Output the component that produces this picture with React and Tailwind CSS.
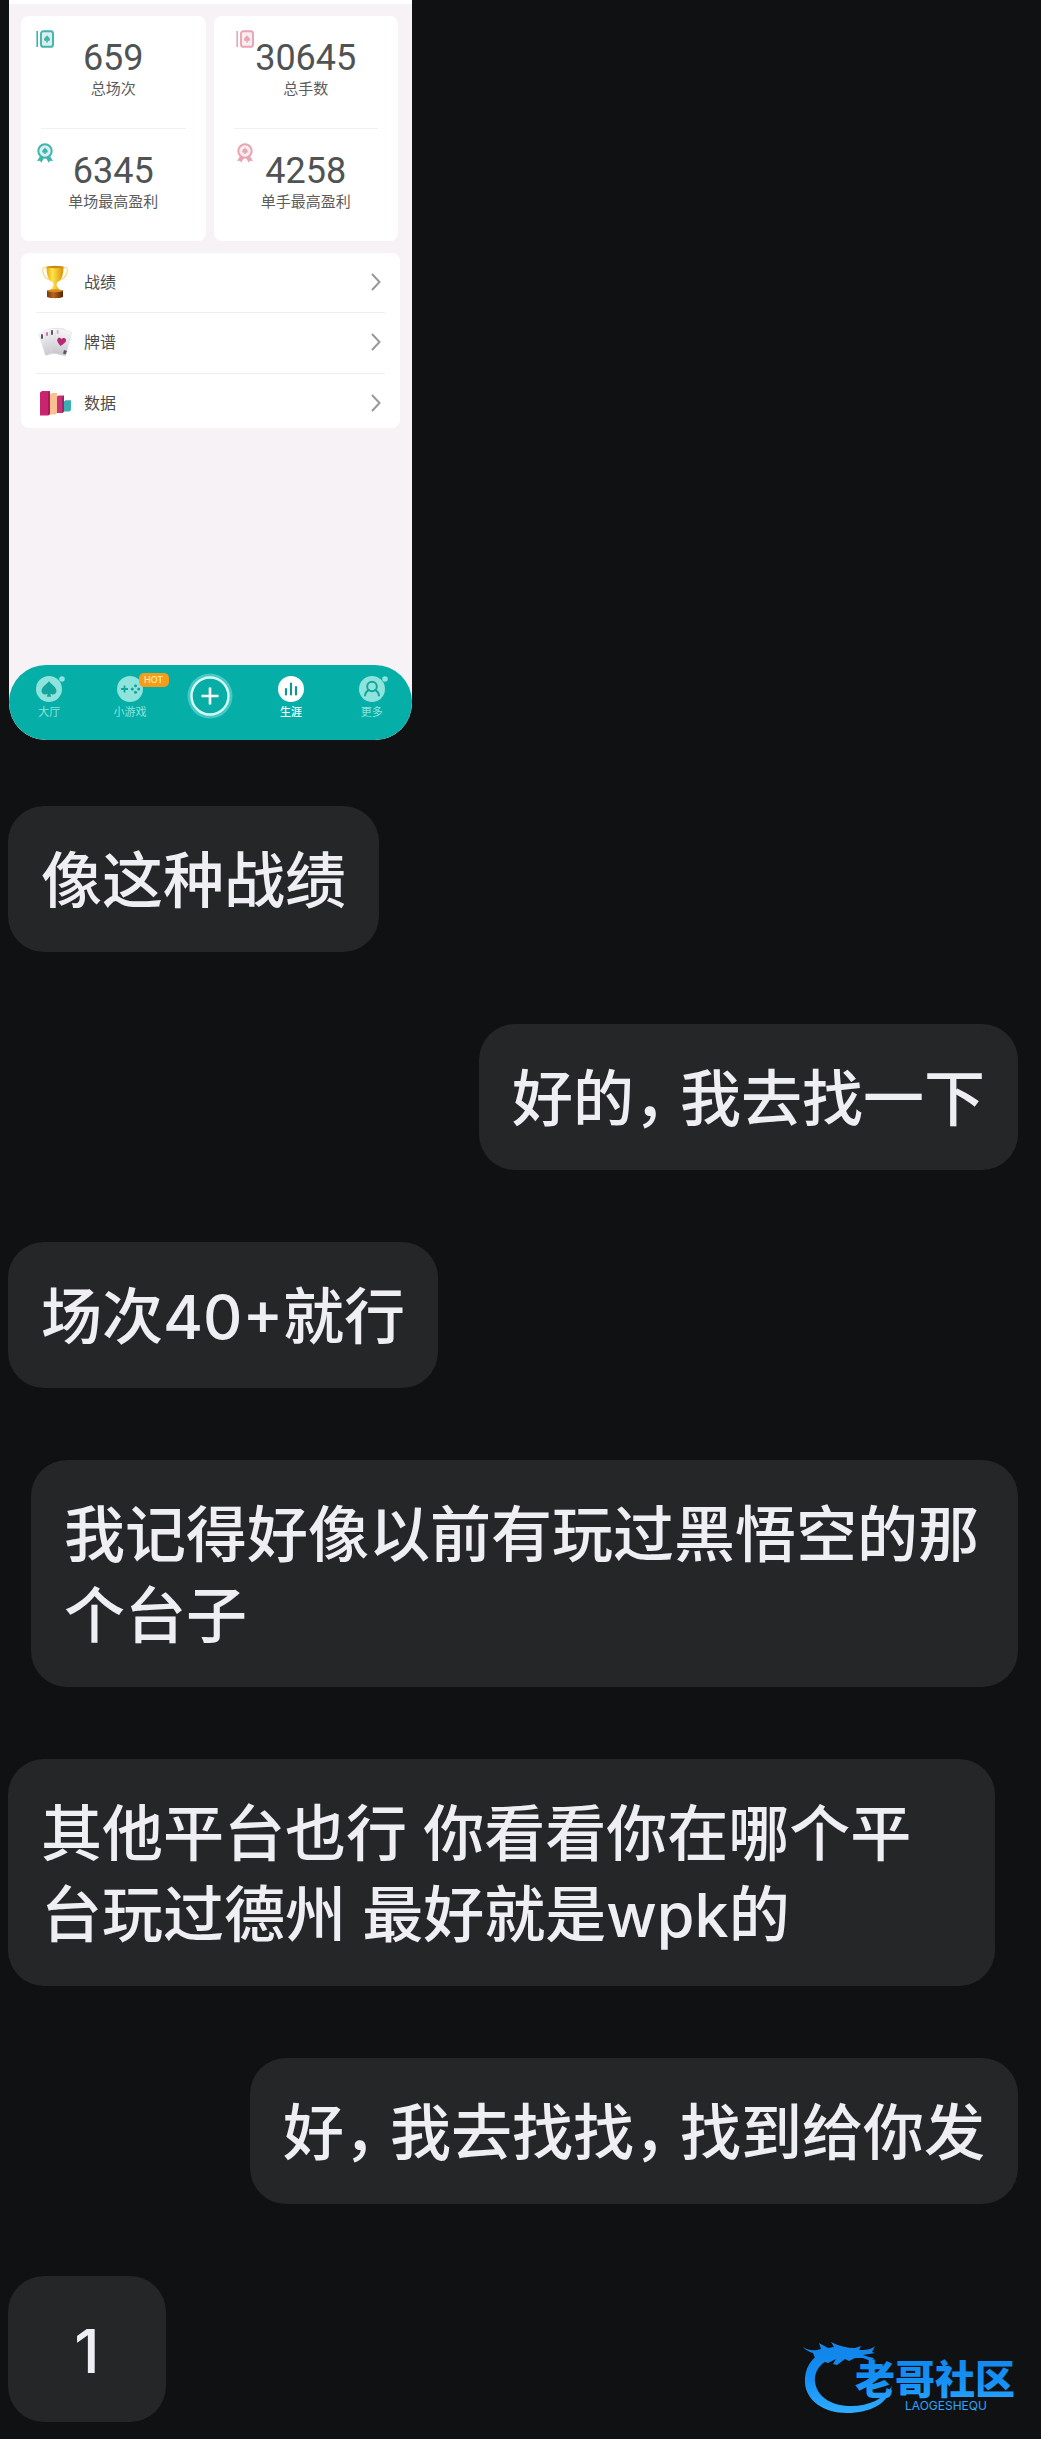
import React from "react";

const cjk = "font-['Inter','Noto_Sans_CJK_SC',sans-serif]";

const messages = [
  { id: 1, from: "them", text: "像这种战绩" },
  { id: 2, from: "me", text: "好的，我去找一下" },
  { id: 3, from: "them", text: "场次40+就行" },
  { id: 4, from: "me", text: "我记得好像以前有玩过黑悟空的那个台子" },
  {
    id: 5,
    from: "them",
    text: "其他平台也行 你看看你在哪个平台玩过德州 最好就是wpk的",
  },
  { id: 6, from: "me", text: "好，我去找找，找到给你发" },
  { id: 7, from: "them", text: "1" },
];

const CardsIcon = () => (
  <svg width="18" height="18" viewBox="0 0 18 18" fill="none">
    <path d="M1.2 1v16" stroke="currentColor" strokeWidth="1.6" />
    <rect x="5" y="1.2" width="12" height="15.6" rx="2.4" stroke="currentColor" strokeWidth="1.9" fill="currentColor" fillOpacity="0.2" />
    <path
      d="M11 5.2c.8 1.4 3 2.5 3 4.3 0 1.4-1.6 1.9-2.5 1.1l.6 1.8H9.9l.6-1.8C9.6 11.4 8 10.9 8 9.5c0-1.8 2.2-2.9 3-4.3z"
      fill="currentColor"
    />
  </svg>
);

const MedalIcon = () => (
  <svg width="18" height="20" viewBox="0 0 18 20" fill="none">
    <path d="M4.5 12.5 1 18l3-.2 1.3 2L8.5 14zM13.5 12.5 17 18l-3-.2-1.3 2L9.5 14z" fill="currentColor" />
    <circle cx="9" cy="8" r="6.7" fill="#fff" />
    <circle cx="9" cy="8" r="6.7" fill="currentColor" fillOpacity="0.2" stroke="currentColor" strokeWidth="2" />
    <path
      d="M9 4.5c.7 1.3 2.8 2.3 2.8 3.9 0 1.3-1.5 1.7-2.3 1l.5 1.7H8l.5-1.7c-.8.7-2.3.3-2.3-1 0-1.6 2.1-2.6 2.8-3.9z"
      fill="currentColor"
    />
  </svg>
);

const TrophyIcon = () => (
  <svg width="26" height="34" viewBox="0 0 26 34" fill="none">
    <defs>
      <linearGradient id="gold" x1="0" x2="1">
        <stop offset="0" stopColor="#e8a80c" />
        <stop offset="0.35" stopColor="#ffe34a" />
        <stop offset="1" stopColor="#d98f06" />
      </linearGradient>
      <linearGradient id="wood" x1="0" x2="1">
        <stop offset="0" stopColor="#7a3508" />
        <stop offset="0.4" stopColor="#b9651c" />
        <stop offset="1" stopColor="#552204" />
      </linearGradient>
    </defs>
    <path d="M5 3C1 1 0 4 1.2 8c1 4 4 6 7 7M21 3c4-2 5 1 3.8 5-1 4-4 6-7 7" stroke="#f5dc85" strokeWidth="1.2" />
    <path d="M4.5 1.5h17c0 9-2 14-6.500 16l-.5 3 3.500 5H8l3.500-5-.5-3c-4.500-2-6.500-7-6.500-16z" fill="url(#gold)" />
    <ellipse cx="13" cy="2" rx="8.5" ry="1.2" fill="#c98a10" />
    <path d="M5 25.5h16v6c0 2.2-16 2.2-16 0z" fill="url(#wood)" />
    <ellipse cx="13" cy="25.8" rx="8" ry="1.5" fill="#d58a2b" />
  </svg>
);

const PokerIcon = () => (
  <svg width="34" height="30" viewBox="0 0 34 30">
    <defs>
      <linearGradient id="card" x1="0" y1="0" x2="0" y2="1">
        <stop offset="0" stopColor="#f7f6f8" />
        <stop offset="1" stopColor="#c9c7cc" />
      </linearGradient>
    </defs>
    <g stroke="#dddbe0" strokeWidth="0.5" fill="url(#card)">
      <rect x="4" y="4" width="15" height="23" rx="1.5" transform="rotate(-17 11 16)" />
      <rect x="8" y="2" width="15" height="24" rx="1.5" transform="rotate(-9 15 14)" />
      <rect x="12" y="1.5" width="15" height="25" rx="1.5" />
      <rect x="16" y="2.5" width="15" height="25" rx="1.5" transform="rotate(14 23 15)" />
    </g>
    <g fill="#5d5560">
      <rect x="3" y="7" width="2" height="5" rx="1" />
      <rect x="13" y="3" width="2" height="5" rx="1" />
      <path d="m26 23 3 1-1.5 3.5-2.5-1z" />
    </g>
    <rect x="8" y="5" width="2" height="4" rx="1" fill="#c9799f" />
    <rect x="19" y="3" width="1.5" height="4" rx="0.7" fill="#c8a9bb" />
    <path d="M22.5 19c-2-3-4-4.5-3-7 1-2 3.5-1.5 4 .5 1-2 4-2 4.500.3.500 2.600-2.500 4.200-5.500 6.200z" fill="#b52a72" />
  </svg>
);

const ChartBarsIcon = () => (
  <svg width="32" height="26" viewBox="0 0 32 26">
    <path d="M1 2.5 3 1h8v23l-2 1.500H1z" fill="#c9246f" />
    <path d="M9 2.500 11 1v23l-2 1.500z" fill="#a81a5c" />
    <path d="M11 4.500 12.500 3H18v20l-1.500 1.500H11z" fill="#fbc08f" />
    <path d="M18 6.500 19.500 5.500H25v16L23.500 23H18z" fill="#c9327a" />
    <path d="M23 7 25 5.500v16L23 23z" fill="#a3245c" />
    <path d="M25 11.500l1.500-1.200H32v9.700l-1.500 1.500H25z" fill="#3aaeb2" />
  </svg>
);

const Chevron = () => (
  <svg width="10" height="18" viewBox="0 0 10 18" fill="none">
    <path d="m1 1 7.5 8L1 17" stroke="#989898" strokeWidth="2" />
  </svg>
);

const HallIcon = () => (
  <svg width="32" height="26" viewBox="-3 0 32 26">
    <circle cx="13" cy="13" r="13" fill="#8ee3dc" />
    <circle cx="26" cy="3" r="2.8" fill="#8ee3dc" />
    <path
      d="M13 5c1.8 3.2 7.5 5.5 7.5 10 0 3.2-3.8 4.5-6.2 2.5l.9 3.2h-4.4l.9-3.2C9.3 19.5 5.5 18.2 5.5 15c0-4.5 5.7-6.8 7.5-10z"
      fill="#12a59b"
    />
  </svg>
);

const GameIcon = () => (
  <svg width="26" height="26" viewBox="0 0 26 26">
    <circle cx="13" cy="13" r="13" fill="#8ee3dc" />
    <path d="M4 13h7M7.5 9.5v7" stroke="#12a59b" strokeWidth="1.8" />
    <g fill="#12a59b">
      <circle cx="18.5" cy="9.8" r="1.5" />
      <circle cx="18.5" cy="16.2" r="1.5" />
      <circle cx="15.3" cy="13" r="1.5" />
      <circle cx="21.7" cy="13" r="1.5" />
    </g>
  </svg>
);

const CareerIcon = () => (
  <svg width="26" height="26" viewBox="0 0 26 26">
    <circle cx="13" cy="13" r="13" fill="#fff" />
    <path d="M8 13v5.5M13 7.5v11M18 11v7.5" stroke="#10968f" strokeWidth="2.2" strokeLinecap="round" />
  </svg>
);

const MoreIcon = () => (
  <svg width="32" height="26" viewBox="-3 0 32 26" fill="none">
    <circle cx="13" cy="13" r="13" fill="#8ee3dc" />
    <circle cx="26" cy="3" r="2.8" fill="#8ee3dc" />
    <circle cx="13" cy="10.5" r="4.8" stroke="#12a59b" strokeWidth="1.9" />
    <path d="M6 19.5c.5-3 2-4.8 4-5.5M20 19.5c-.5-3-2-4.8-4-5.5" stroke="#12a59b" strokeWidth="1.9" strokeLinecap="round" />
  </svg>
);

const PlusIcon = () => (
  <svg width="46" height="46" viewBox="0 0 46 46" fill="none">
    <circle cx="23" cy="23" r="22.5" fill="#45c9c2" />
    <circle cx="23" cy="23" r="18.5" fill="#08aea6" stroke="#d5fbf7" strokeWidth="2.4" />
    <path d="M14.5 23h17M23 14.5v17" stroke="#fff" strokeWidth="2.6" />
  </svg>
);

const Stat = ({ icon, iconClass, value, label }) => (
  <div className="relative flex flex-col items-center gap-[3px] pt-6 pb-[29px]">
    <div className={`absolute top-3.5 ${iconClass}`}>{icon}</div>
    <div className="font-['Roboto'] text-[36px] leading-9 text-[#505353]">{value}</div>
    <div className="text-[15px] leading-5 text-[#5c5c5c]">{label}</div>
  </div>
);

const StatCard = ({ color, iconClass, top, bottom }) => (
  <div className={`rounded-lg bg-white ${color}`}>
    <Stat icon={<CardsIcon />} iconClass={iconClass} {...top} />
    <div className="mx-5 h-px bg-[#f0f0f2]" />
    <Stat icon={<MedalIcon />} iconClass={iconClass} {...bottom} />
  </div>
);

const MenuRow = ({ icon, label, className }) => (
  <button className={`flex w-full cursor-pointer items-center text-left ${className}`}>
    <span className="flex w-12 justify-center pr-2.5">{icon}</span>
    <span className="flex-1 text-[16px] leading-6 text-[#4c4c4c]">{label}</span>
    <span className="pr-1">
      <Chevron />
    </span>
  </button>
);

const NavItem = ({ icon, label, active, badge }) => (
  <button className="relative flex cursor-pointer flex-col items-center gap-0.5 pt-[11px]">
    {icon}
    <span className={`text-[11px] leading-4 ${active ? "font-medium text-white" : "text-[#8ee3dc]"}`}>
      {label}
    </span>
    {badge && (
      <span className="absolute top-2 left-[49px] flex h-[14px] w-[30px] items-center justify-center rounded-[5px] bg-[#f59c1a] text-[9px] leading-3 font-medium text-[#ffedb0]">
        {badge}
      </span>
    )}
  </button>
);

const CareerShot = () => (
  <div className="ml-px flex w-[403px] max-w-full flex-col overflow-hidden rounded-b-[37px] bg-[#f7f2f6]">
    <div className="h-1 bg-white" />
    <div className="px-3 pt-3">
      <div className="grid grid-cols-2 gap-2 pr-0.5">
        <StatCard
          color="text-[#3fb5ad]"
          iconClass="left-[15px]"
          top={{ value: "659", label: "总场次" }}
          bottom={{ value: "6345", label: "单场最高盈利" }}
        />
        <StatCard
          color="text-[#e8a5b3]"
          iconClass="left-[22px]"
          top={{ value: "30645", label: "总手数" }}
          bottom={{ value: "4258", label: "单手最高盈利" }}
        />
      </div>
      <div className="mt-3 rounded-lg bg-white px-[15px]">
        <MenuRow className="h-[60px] border-b border-[#eeeeef] pb-0.5" icon={<TrophyIcon />} label="战绩" />
        <MenuRow className="h-[61px] border-b border-[#eeeeef] pb-0.5" icon={<PokerIcon />} label="牌谱" />
        <MenuRow className="h-[54px] pt-1" icon={<ChartBarsIcon />} label="数据" />
      </div>
    </div>
    <nav className="mt-[237px] grid h-[75px] grid-cols-5 items-start rounded-[37px] bg-[#05aea7]">
      <NavItem icon={<HallIcon />} label="大厅" />
      <NavItem icon={<GameIcon />} label="小游戏" badge="HOT" />
      <button aria-label="新建" className="flex cursor-pointer justify-center pt-2">
        <PlusIcon />
      </button>
      <NavItem icon={<CareerIcon />} label="生涯" active />
      <NavItem icon={<MoreIcon />} label="更多" />
    </nav>
  </div>
);

// the comma takes less room than a whole character in the bubbles
const renderText = (text) =>
  text.split(/(，)/).map((part, i) =>
    part === "，" ? (
      <span key={i} className="inline-block w-[46px] [font-feature-settings:'halt']">
        {part}
      </span>
    ) : (
      part
    )
  );

const Bubble = ({ from, text }) => (
  <div
    className={`max-w-[987px] min-w-[158px] rounded-[36px] bg-[#252628] px-[33px] pt-[35px] pb-[30px] text-[61px] leading-[81px] font-medium text-[#efeff3] ${
      from === "me" ? "self-end" : "self-start"
    } ${text.length === 1 ? "text-center" : ""}`}
  >
    {renderText(text)}
  </div>
);

const Watermark = () => (
  <svg
    className="absolute right-[14px] bottom-5"
    width="226"
    height="80"
    viewBox="0 0 226 80"
    aria-label="老哥社区 LAOGESHEQU"
  >
    <defs>
      <linearGradient id="blue" gradientUnits="userSpaceOnUse" x1="0" y1="12" x2="0" y2="72">
        <stop offset="0" stopColor="#1286ea" />
        <stop offset="0.5" stopColor="#1590f5" />
        <stop offset="1" stopColor="#2fabff" />
      </linearGradient>
    </defs>
    <g fill="url(#blue)">
      {/* body */}
      <path d="M24 12C10 18 3 30 4 44c1 17 18 30 42 30 23 0 41-9 45-27-8 13-23 20-41 20-21 0-34-10-36-24-1-13 8-23 25-25l-4-6z" />
      {/* head and whiskers */}
      <path d="M2 8c6 4 12 4 18 2l-2-6 9 5 6-1-3-5c8 4 16 6 24 6l6-2-2 4c6 0 12 0 16-4l-3 6 3 1-12 2 6 2 5 1-3 3-8-3-8 0-6 3-4-2-8 6-4-1 3-5-8 4-6-2 2-4-9 1-2-5C13 14 6 13 2 8z" />
      <text x="54" y="55" fontSize="40" fontWeight="900" className="font-['Noto_Sans_CJK_SC',sans-serif]">
        老哥社区
      </text>
      <text x="104" y="71" fontSize="12" className="font-['Inter',sans-serif]">
        LAOGESHEQU
      </text>
    </g>
  </svg>
);

const App = () => {
  return (
    <main
      lang="zh-CN"
      className={`relative flex min-h-screen flex-col bg-[#101113] pr-[23px] pb-[17px] pl-2 ${cjk}`}
    >
      <CareerShot />
      <div className="mt-[66px] flex flex-col gap-[72px]">
        {messages.map((m) => (
          <Bubble key={m.id} from={m.from} text={m.text} />
        ))}
      </div>
      <Watermark />
    </main>
  );
};

export default App;
